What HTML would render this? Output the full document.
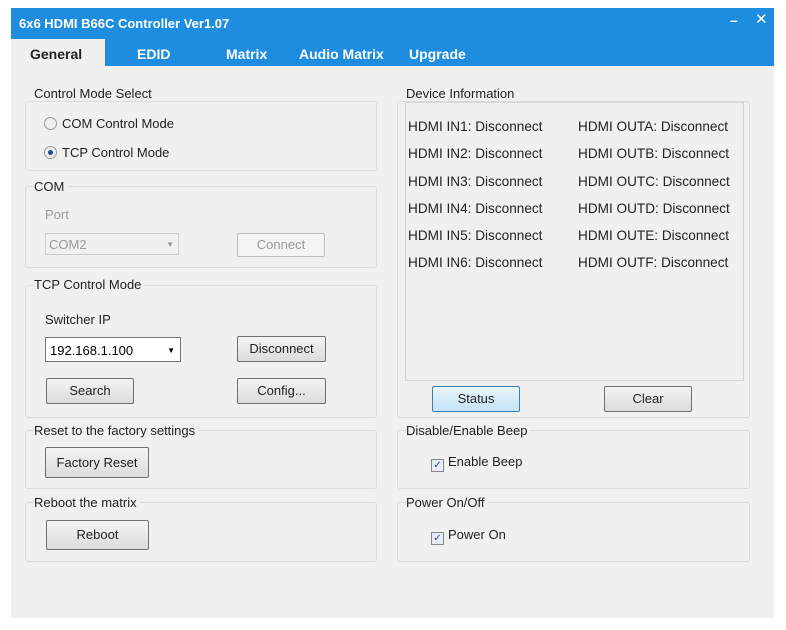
<html><head><style>
body{margin:0;width:786px;height:630px;background:#fff;position:relative;font-family:"Liberation Sans",sans-serif;font-size:13px;color:#222;overflow:hidden}
.a{position:absolute}
.win{left:11px;top:8px;width:763px;height:610px;background:#f0f0f0}
.title{left:11px;top:8px;width:763px;height:58px;background:#1e8de0}
.t{color:#fff;font-weight:bold}
.g{position:absolute;border:1px solid #dcdcdc;border-radius:3px}
.lbl{position:absolute;background:#f0f0f0;padding-right:3px}
.btn{position:absolute;border:1px solid #707070;border-radius:2px;background:linear-gradient(#f4f4f4,#dcdcdc);text-align:center;line-height:24px;height:24px}
.chk{display:inline-block;width:11px;height:11px;border:1px solid #888;background:#e8eef8;vertical-align:-2px;margin-right:4px;font-size:10px;line-height:11px;text-align:center;color:#2a4a8a}
.rad{display:inline-block;width:11px;height:11px;border:1px solid #999;border-radius:50%;background:#eee;vertical-align:-2px;margin-right:5px;position:relative}
.dev{font-size:13.6px;line-height:27.3px}
</style></head><body>
<div class="a win"></div>
<div class="a title"></div>
<div class="a t" style="left:19px;top:16px;font-size:13px">6x6 HDMI B66C Controller Ver1.07</div>
<div class="a t" style="left:730px;top:12px;font-size:14px">–</div>
<div class="a t" style="left:755px;top:10px;font-size:15px;font-weight:normal">✕</div>
<div class="a" style="left:11px;top:39px;width:94px;height:27px;background:#f0f0f0"></div>
<div class="a" style="left:30px;top:46px;font-weight:bold;font-size:14px">General</div>
<div class="a t" style="left:137px;top:46px;font-size:14px">EDID</div>
<div class="a t" style="left:226px;top:46px;font-size:14px">Matrix</div>
<div class="a t" style="left:299px;top:46px;font-size:14px">Audio Matrix</div>
<div class="a t" style="left:409px;top:46px;font-size:14px">Upgrade</div>

<div class="g" style="left:25px;top:101px;width:350px;height:68px"></div>
<div class="lbl" style="left:34px;top:86px">Control Mode Select</div>
<div class="a" style="left:44px;top:116px"><span class="rad"></span>COM Control Mode</div>
<div class="a" style="left:44px;top:145px"><span class="rad"><span class="a" style="left:3px;top:3px;width:5px;height:5px;border-radius:50%;background:#1a4f8a"></span></span>TCP Control Mode</div>

<div class="g" style="left:25px;top:186px;width:350px;height:80px"></div>
<div class="lbl" style="left:34px;top:179px">COM</div>
<div class="a" style="left:45px;top:207px;color:#999">Port</div>
<div class="a" style="left:45px;top:233px;width:134px;height:22px;border:1px solid #ccc;background:#f0f0f0;color:#999;line-height:22px;padding-left:3px;box-sizing:border-box">COM2<span style="float:right;margin-right:4px;font-size:8px">▼</span></div>
<div class="btn" style="left:237px;top:233px;width:86px;height:22px;line-height:22px;border-color:#bbb;color:#999;background:#f4f4f4">Connect</div>

<div class="g" style="left:25px;top:285px;width:350px;height:131px"></div>
<div class="lbl" style="left:34px;top:277px">TCP Control Mode</div>
<div class="a" style="left:45px;top:312px">Switcher IP</div>
<div class="a" style="left:45px;top:337px;width:136px;height:25px;border:1px solid #777;background:#fff;line-height:25px;padding-left:4px;box-sizing:border-box;color:#000">192.168.1.100<span style="float:right;margin-right:5px;font-size:8px">▼</span></div>
<div class="btn" style="left:237px;top:336px;width:87px">Disconnect</div>
<div class="btn" style="left:46px;top:378px;width:86px">Search</div>
<div class="btn" style="left:237px;top:378px;width:87px">Config...</div>

<div class="g" style="left:25px;top:430px;width:350px;height:57px"></div>
<div class="lbl" style="left:34px;top:423px">Reset to the factory settings</div>
<div class="btn" style="left:45px;top:447px;width:102px;height:29px;line-height:29px">Factory Reset</div>

<div class="g" style="left:25px;top:502px;width:350px;height:58px"></div>
<div class="lbl" style="left:34px;top:495px">Reboot the matrix</div>
<div class="btn" style="left:46px;top:520px;width:101px;height:28px;line-height:28px">Reboot</div>

<div class="g" style="left:397px;top:101px;width:351px;height:315px"></div>
<div class="lbl" style="left:406px;top:86px">Device Information</div>
<div class="a" style="left:405px;top:102px;width:337px;height:277px;border:1px solid #d4d4d4"></div>
<div class="a dev" style="left:408px;top:113px">HDMI IN1: Disconnect<br>HDMI IN2: Disconnect<br>HDMI IN3: Disconnect<br>HDMI IN4: Disconnect<br>HDMI IN5: Disconnect<br>HDMI IN6: Disconnect</div>
<div class="a dev" style="left:578px;top:113px">HDMI OUTA: Disconnect<br>HDMI OUTB: Disconnect<br>HDMI OUTC: Disconnect<br>HDMI OUTD: Disconnect<br>HDMI OUTE: Disconnect<br>HDMI OUTF: Disconnect</div>
<div class="btn" style="left:432px;top:386px;width:86px;border-color:#3c7fb1;background:linear-gradient(#eaf6fd,#c4e3f6)">Status</div>
<div class="btn" style="left:604px;top:386px;width:86px">Clear</div>

<div class="g" style="left:397px;top:430px;width:351px;height:57px"></div>
<div class="lbl" style="left:406px;top:423px">Disable/Enable Beep</div>
<div class="a" style="left:431px;top:454px"><span class="chk">✓</span>Enable Beep</div>

<div class="g" style="left:397px;top:502px;width:351px;height:58px"></div>
<div class="lbl" style="left:406px;top:495px">Power On/Off</div>
<div class="a" style="left:431px;top:527px"><span class="chk">✓</span>Power On</div>
</body></html>
